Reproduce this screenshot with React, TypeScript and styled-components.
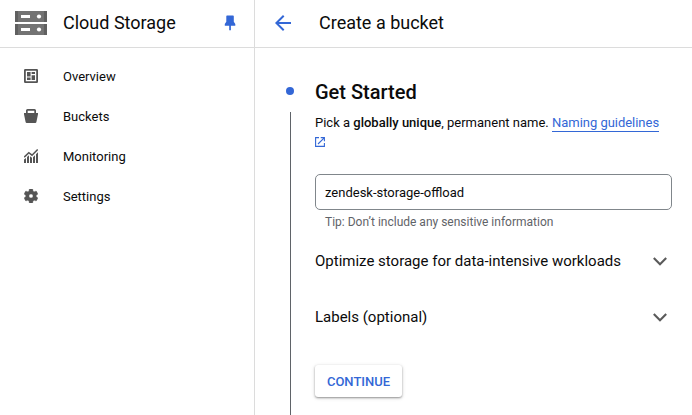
import React from "react";
import styled, { createGlobalStyle } from "styled-components";

const GlobalStyle = createGlobalStyle`
  * { box-sizing: border-box; }
  body {
    margin: 0;
    overflow: hidden;
    background: #fff;
    color: #0b0b0b;
    font-family: Roboto, "Liberation Sans", sans-serif;
    font-size: 13px;
  }
  svg { display: block; flex: none; }
`;

const Page = styled.div`
  display: grid;
  grid-template-columns: 255px 1fr;
  height: 415px;
`;

const Sidebar = styled.aside`
  border-right: 1px solid #dcdcdc;
`;

const Header = styled.header<{ $left: number }>`
  display: flex;
  align-items: center;
  height: 48px;
  padding: 0 18px 2px ${(p) => p.$left}px;
  border-bottom: 1px solid #dcdcdc;
`;

const Title = styled.h1<{ $gap: number }>`
  margin: 0 auto 0 ${(p) => p.$gap}px;
  font-size: 18px;
  font-weight: 400;
  line-height: 24px;
  white-space: nowrap;
`;

const Nav = styled.nav`
  padding-top: 8px;
`;

const NavItem = styled.a`
  display: flex;
  align-items: center;
  gap: 25px;
  height: 40px;
  padding-left: 24px;
  color: #0b0b0b;
`;

const Wizard = styled.div`
  display: grid;
  grid-template-columns: 60px 357px;
  height: 367px;
`;

const Rail = styled.div`
  display: flex;
  flex-direction: column;
  align-items: center;
  padding: 39px 0 0 10px;
`;

const Dot = styled.span`
  width: 8px;
  height: 8px;
  border-radius: 50%;
  background: #3367d6;
`;

const Line = styled.span`
  flex: 1;
  width: 1px;
  margin: 17px 0 0;
  background: #5f6368;
`;

const Step = styled.section`
  padding-top: 30px;
`;

const StepTitle = styled.h2`
  margin: 0;
  font-size: 20px;
  font-weight: 500;
  line-height: 28px;
`;

const Intro = styled.p`
  height: 20px;
  margin: 7px 0 0;
  line-height: 20px;
  white-space: nowrap;
  b { font-weight: 500; }
`;

const Link = styled.a`
  display: inline-block;
  height: 19px;
  border-bottom: 1px solid #3367d6;
  color: #3367d6;
  letter-spacing: -0.03px;
`;

const External = styled.div`
  margin-top: 4px;
`;

const NameInput = styled.input`
  display: block;
  width: 357px;
  height: 36px;
  margin-top: 27px;
  padding: 0 9px;
  border: 1px solid #80868b;
  border-radius: 5px;
  outline: 0;
  background: #fff;
  color: #0b0b0b;
  font: inherit;
`;

const Tip = styled.div`
  margin: 4px 0 3px 10px;
  color: #5f6368;
  font-size: 12px;
  line-height: 16px;
`;

const Expander = styled.div`
  display: flex;
  align-items: center;
  justify-content: space-between;
  height: 56px;
  padding-right: 5px;
  font-size: 15px;
  white-space: nowrap;
`;

const Continue = styled.button`
  width: 87px;
  height: 32px;
  margin-top: 20px;
  padding: 0;
  border: 0;
  border-radius: 3px;
  background: #fff;
  box-shadow: 0 1px 2px rgba(0, 0, 0, 0.35), 0 1px 4px rgba(0, 0, 0, 0.15);
  color: #3367d6;
  font: 500 13px Roboto, sans-serif;
`;

const Chevron = () => (
  <svg width="14" height="9" viewBox="0 0 14 9" fill="none" stroke="#5a5a5a" strokeWidth="2.1">
    <path d="M.8 .9 7 7.2 13.2 .9" />
  </svg>
);

const StorageLogo = () => (
  <svg width="32" height="24" viewBox="0 0 32 24">
    {[0, 13].map((y) => (
      <g key={y} transform={`translate(0 ${y})`}>
        <path fill="#737373" d="M0 0h32v11H0z" />
        <path fill="#606060" d="M0 0h3v11H0zM29 0h3v11h-3z" />
        <path fill="#fff" d="M6 4h9v3H6z" />
        <circle cx="24" cy="5.5" r="2.1" fill="#fff" />
      </g>
    ))}
  </svg>
);

const Pin = () => (
  <svg width="12" height="16" viewBox="0 0 12 16" fill="#3367d6">
    <path d="M3 .5h6a.8.8 0 0 1 .8.8v5.5L11.3 9v1.8H6.9v4.5H5.2v-4.5H.8V9l1.5-2.2V1.3A.8.8 0 0 1 3 .5z" />
  </svg>
);

const BackArrow = () => (
  <svg width="24" height="24" viewBox="0 0 24 24" fill="#3367d6">
    <path d="M20 11H7.83l5.59-5.59L12 4l-8 8 8 8 1.41-1.41L7.83 13H20v-2z" />
  </svg>
);

const OverviewIcon = () => (
  <svg width="14" height="14" viewBox="0 0 14 14" fill="#555">
    <path fillRule="evenodd" d="M1.2 0h11.6A1.2 1.2 0 0 1 14 1.2v11.6a1.2 1.2 0 0 1-1.2 1.2H1.2A1.2 1.2 0 0 1 0 12.8V1.2A1.2 1.2 0 0 1 1.2 0zM1.8 1.8v10.4h10.4V1.8z" />
    <path d="M3 3h3.6v4.4H3zM7.6 3H11v2.1H7.6zM3 8.4h3.6V11H3zM7.6 6.2H11V11H7.6z" />
  </svg>
);

const BucketIcon = () => (
  <svg width="14" height="14" viewBox="0 0 14 14" fill="#555">
    <path fillRule="evenodd" d="M3.5 0h7A1.5 1.5 0 0 1 12 1.5V4h2v1.2L12.4 13a1.2 1.2 0 0 1-1.2 1H2.8a1.2 1.2 0 0 1-1.2-1L0 5.2V4h2V1.5A1.5 1.5 0 0 1 3.5 0zm.2 1.7V4h6.6V1.7z" />
  </svg>
);

const MonitoringIcon = () => (
  <svg width="14" height="14" viewBox="0 0 14 14" fill="#555">
    <path d="M0 10.6 2 8.9V14H0zM3 8l2-1.8V14H3zM6 7.2l2 1.5V14H6zM9 8.2l2-2V14H9zM12 5.2l2-2V14h-2z" />
    <path d="M.2 8.2 4.8 3.7 8 6.2 13.7.5" fill="none" stroke="#555" strokeWidth="1.5" />
  </svg>
);

const SettingsIcon = () => (
  <svg width="14" height="14" viewBox="2 2 20 20" fill="#555" stroke="#555" strokeWidth=".6">
    <path d="M19.43 12.98c.04-.32.07-.64.07-.98s-.03-.66-.07-.98l2.11-1.65c.19-.15.24-.42.12-.64l-2-3.46c-.12-.22-.39-.3-.61-.22l-2.49 1c-.52-.4-1.08-.73-1.69-.98l-.38-2.65C14.46 2.18 14.25 2 14 2h-4c-.25 0-.46.18-.49.42l-.38 2.65c-.61.25-1.17.59-1.69.98l-2.49-1c-.23-.09-.49 0-.61.22l-2 3.46c-.13.22-.07.49.12.64l2.11 1.65c-.04.32-.07.65-.07.98s.03.66.07.98l-2.11 1.65c-.19.15-.24.42-.12.64l2 3.46c.12.22.39.3.61.22l2.49-1c.52.4 1.08.73 1.69.98l.38 2.65c.03.24.24.42.49.42h4c.25 0 .46-.18.49-.42l.38-2.65c.61-.25 1.17-.59 1.69-.98l2.49 1c.23.09.49 0 .61-.22l2-3.46c.12-.22.07-.49-.12-.64l-2.11-1.65zM12 15a3 3 0 1 1 0-6 3 3 0 0 1 0 6z" />
  </svg>
);

const ExternalIcon = () => (
  <svg width="10" height="10" viewBox="0 0 10 10" fill="none" stroke="#3367d6" strokeWidth="1.1">
    <path d="M4 .6H.6v8.8h8.8V6M5.7.6h3.7v3.7M9.2.8 3 7" />
  </svg>
);

const NAV = [
  { label: "Overview", Icon: OverviewIcon },
  { label: "Buckets", Icon: BucketIcon },
  { label: "Monitoring", Icon: MonitoringIcon },
  { label: "Settings", Icon: SettingsIcon },
];

export default function App() {
  return (
    <>
      <GlobalStyle />
      <Page>
        <Sidebar>
          <Header $left={15}>
            <StorageLogo />
            <Title $gap={16}>Cloud Storage</Title>
            <Pin />
          </Header>
          <Nav>
            {NAV.map(({ label, Icon }) => (
              <NavItem key={label}>
                <Icon />
                {label}
              </NavItem>
            ))}
          </Nav>
        </Sidebar>
        <main>
          <Header $left={16}>
            <BackArrow />
            <Title $gap={24}>Create a bucket</Title>
          </Header>
          <Wizard>
            <Rail>
              <Dot />
              <Line />
            </Rail>
            <Step>
              <StepTitle>Get Started</StepTitle>
              <Intro>
                Pick a <b>globally unique</b>, permanent name. <Link>Naming guidelines</Link>
              </Intro>
              <External>
                <ExternalIcon />
              </External>
              <NameInput defaultValue="zendesk-storage-offload" />
              <Tip>Tip: Don’t include any sensitive information</Tip>
              <Expander>
                Optimize storage for data-intensive workloads
                <Chevron />
              </Expander>
              <Expander>
                Labels (optional)
                <Chevron />
              </Expander>
              <Continue>CONTINUE</Continue>
            </Step>
          </Wizard>
        </main>
      </Page>
    </>
  );
}
